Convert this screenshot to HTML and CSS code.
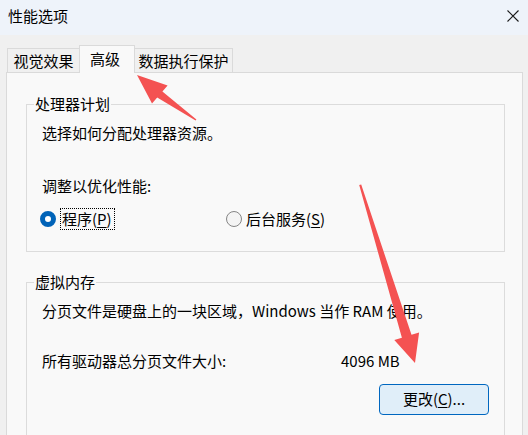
FILE: index.html
```html
<!DOCTYPE html>
<html lang="zh-CN">
<head>
<meta charset="utf-8">
<title>性能选项</title>
<link rel="stylesheet" href="styles.css">
</head>
<body>
<div class="window">
  <div class="titlebar">
    <span class="title">性能选项</span>
    <svg class="close" width="12" height="12" viewBox="0 0 12 12"><path d="M0.5 0.5 L11.5 11.5 M11.5 0.5 L0.5 11.5" stroke="#1a1a1a" stroke-width="1.1" fill="none"/></svg>
  </div>
  <div class="tabs">
    <div class="tab tab-visual">视觉效果</div>
    <div class="tab tab-adv active">高级</div>
    <div class="tab tab-dep">数据执行保护</div>
  </div>
  <div class="panel">
    <fieldset class="group group-cpu">
      <legend>处理器计划</legend>
      <div class="line">选择如何分配处理器资源。</div>
      <div class="line line-adjust">调整以优化性能:</div>
      <div class="radios">
        <div class="radio-item radio-first">
          <span class="radio checked"></span>
          <span class="radio-label focus">程序(<u>P</u>)</span>
        </div>
        <div class="radio-item radio-second">
          <span class="radio"></span>
          <span class="radio-label">后台服务(<u>S</u>)</span>
        </div>
      </div>
    </fieldset>
    <fieldset class="group group-mem">
      <legend>虚拟内存</legend>
      <div class="line">分页文件是硬盘上的一块区域，Windows 当作 RAM 使用。</div>
      <div class="size-row">
        <span>所有驱动器总分页文件大小:</span>
        <span>4096 MB</span>
      </div>
      <div class="btn-row">
        <button class="btn">更改(<u>C</u>)...</button>
      </div>
    </fieldset>
  </div>
</div>
<svg class="arrows" width="528" height="435" viewBox="0 0 528 435">
  <polygon fill="#f45252" points="137,75 167.6,85.4 162.4,91.5 196.4,119.6 195.6,120.4 157.2,97.5 152,103.6"/>
  <polygon fill="#f45252" points="359.2,185 361.2,184.6 411.5,334.8 419.1,332.5 415,363 394.3,340.1 401.9,337.8"/>
</svg>
</body>
</html>
```
FILE: styles.css
```css
* { box-sizing: border-box; }
html, body {
  margin: 0;
  padding: 0;
}
body {
  width: 528px;
  height: 435px;
  overflow: hidden;
  background: #f0f0f0;
  font-family: "Noto Sans CJK SC", "Noto Sans", sans-serif;
  font-size: 15px;
  color: #000;
  position: relative;
}
.window {
  display: flex;
  flex-direction: column;
  height: 100%;
}
.titlebar {
  height: 35px;
  flex: none;
  background: #eef3fa;
  display: flex;
  align-items: center;
  justify-content: space-between;
  padding: 0 9px 3px 8px;
}
.title {
  font-size: 15px;
  line-height: 20px;
}
.close { display: block; }
.tabs {
  display: flex;
  align-items: flex-end;
  padding: 10px 0 0 7px;
  height: 37px;
  flex: none;
  position: relative;
  z-index: 1;
}
.tab {
  height: 24px;
  border: 1px solid #dadada;
  border-bottom: none;
  background: #f0f0f0;
  line-height: 22px;
  font-size: 15px;
  text-align: center;
}
.tab-visual { width: 72px; border-right: none; padding-top: 1px; }
.tab-adv {
  width: 56px;
  height: 28px;
  margin-bottom: -1px;
  background: #f9f9f9;
  line-height: 26px;
  padding-right: 4px;
}
.tab-dep { width: 98px; border-left: none; padding-top: 1px; }
.panel {
  flex: 1;
  margin: 0 5px 0 6px;
  border: 1px solid #dadada;
  background: #f9f9f9;
  padding-top: 21px;
  display: flex;
  flex-direction: column;
}
.group {
  margin: 0 17px 0 19px;
  border: 1px solid #dcdcdc;
  padding: 9px 15px 21px 15px;
  min-width: 0;
}
.group legend {
  margin-left: -8px;
  padding: 0 1px;
  line-height: 20px;
  font-size: 15px;
}
.line {
  line-height: 20px;
  white-space: nowrap;
}
.line-adjust { margin-top: 33px; }
.radios {
  display: flex;
  margin-top: 12px;
  margin-left: -2px;
  height: 22px;
  align-items: center;
}
.radio-item {
  display: flex;
  align-items: center;
}
.radio-first { width: 186px; }
.radio {
  width: 16px;
  height: 16px;
  border-radius: 50%;
  border: 1px solid #858585;
  background: #f4f4f4;
  margin-right: 3px;
  flex: none;
}
.radio.checked {
  border: 5px solid #0063b8;
  background: #fff;
  margin-right: 5px;
}
.radio-label {
  line-height: 20px;
  padding: 0 1px;
}
.radio-label.focus {
  outline: 1px dotted #000;
  outline-offset: 0;
  padding: 0 2px 0 1px;
}
.group-mem {
  margin-top: 20px;
  flex: 1;
  padding-top: 9px;
}
.size-row {
  display: grid;
  grid-template-columns: 299px auto;
  line-height: 20px;
  margin-top: 30px;
}
.btn-row {
  display: flex;
  justify-content: flex-end;
  margin-top: 13px;
}
.btn {
  width: 110px;
  height: 31px;
  border: 1px solid #0067c0;
  border-radius: 4px;
  background: #e0eef9;
  font-family: inherit;
  font-size: 15px;
  color: #000;
  padding: 0 0 2px 0;
  line-height: 20px;
}
u { text-underline-offset: 2px; }
.arrows {
  position: absolute;
  left: 0;
  top: 0;
  pointer-events: none;
  z-index: 5;
}
```
